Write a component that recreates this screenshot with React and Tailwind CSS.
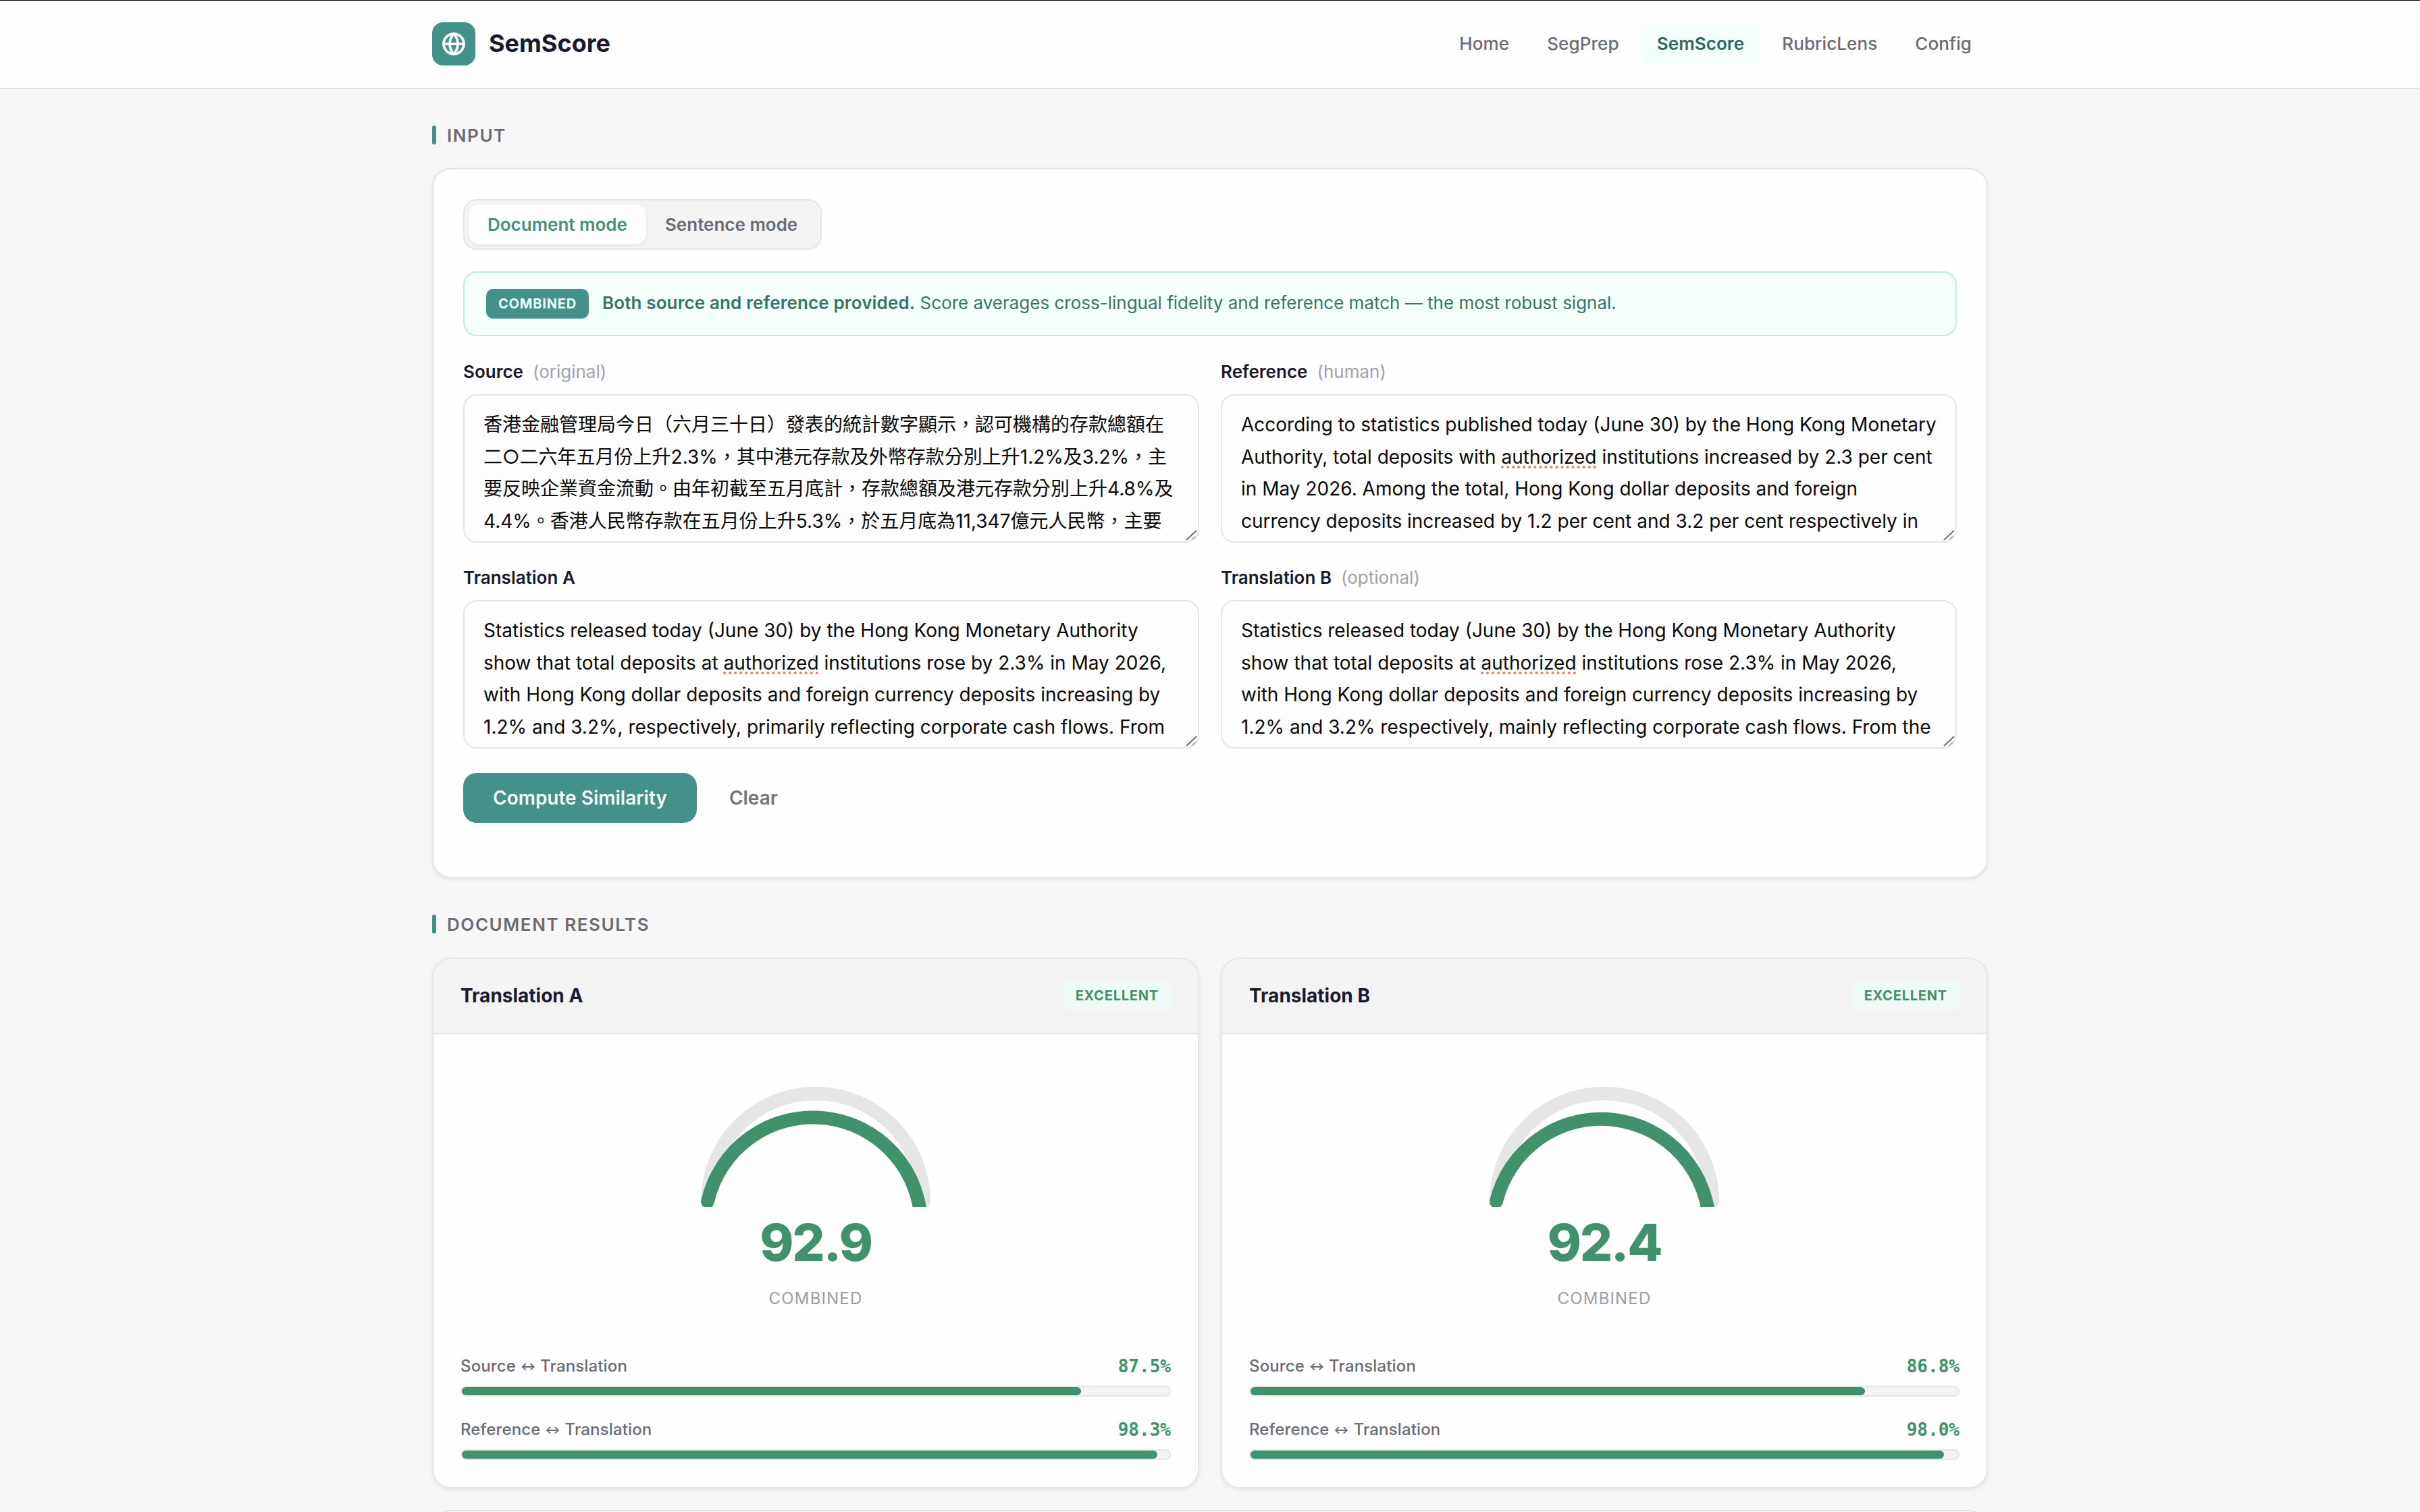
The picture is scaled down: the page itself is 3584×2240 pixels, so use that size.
import React from 'react';

const navItems = ['Home', 'SegPrep', 'SemScore', 'RubricLens', 'Config'];

const fields = [
  {
    label: 'Source',
    hint: '(original)',
    lines: [
      '香港金融管理局今日（六月三十日）發表的統計數字顯示，認可機構的存款總額在',
      '二○二六年五月份上升2.3%，其中港元存款及外幣存款分別上升1.2%及3.2%，主',
      '要反映企業資金流動。由年初截至五月底計，存款總額及港元存款分別上升4.8%及',
      '4.4%。香港人民幣存款在五月份上升5.3%，於五月底為11,347億元人民幣，主要',
    ],
  },
  {
    label: 'Reference',
    hint: '(human)',
    lines: [
      'According to statistics published today (June 30) by the Hong Kong Monetary',
      'Authority, total deposits with authorized institutions increased by 2.3 per cent',
      'in May 2026. Among the total, Hong Kong dollar deposits and foreign',
      'currency deposits increased by 1.2 per cent and 3.2 per cent respectively in',
    ],
  },
  {
    label: 'Translation A',
    lines: [
      'Statistics released today (June 30) by the Hong Kong Monetary Authority',
      'show that total deposits at authorized institutions rose by 2.3% in May 2026,',
      'with Hong Kong dollar deposits and foreign currency deposits increasing by',
      '1.2% and 3.2%, respectively, primarily reflecting corporate cash flows. From',
    ],
  },
  {
    label: 'Translation B',
    hint: '(optional)',
    lines: [
      'Statistics released today (June 30) by the Hong Kong Monetary Authority',
      'show that total deposits at authorized institutions rose 2.3% in May 2026,',
      'with Hong Kong dollar deposits and foreign currency deposits increasing by',
      '1.2% and 3.2% respectively, mainly reflecting corporate cash flows. From the',
    ],
  },
];

const results = [
  { name: 'Translation A', score: 92.9, source: 87.5, reference: 98.3 },
  { name: 'Translation B', score: 92.4, source: 86.8, reference: 98.0 },
];

const SectionTitle = ({ children }) => (
  <div className="flex h-7 items-center gap-4">
    <span className="h-7 w-1.5 rounded-[3px] bg-[#40918a]" />
    <h2 className="text-[26px] font-semibold tracking-[0.06em] text-[#6b6b76]">{children}</h2>
  </div>
);

// Underlines the word flagged by the spell checker
const SpellChecked = ({ text }) => {
  const [before, after] = text.split('authorized');
  if (after === undefined) return text;
  return (
    <>
      {before}
      <span className="underline decoration-[#dc8468] decoration-dotted decoration-[4px] underline-offset-[4px] [text-decoration-skip-ink:none]">
        authorized
      </span>
      {after}
    </>
  );
};

const TextField = ({ label, hint, lines }) => (
  <div>
    <div className="flex h-[42px] items-center gap-3.5 pb-px text-[26px]">
      <span className="font-semibold text-[#1a1a2e]">{label}</span>
      {hint && <span className="text-[#a1a1ad]">{hint}</span>}
    </div>
    <div className="relative mt-3 h-[220px] overflow-hidden rounded-[20px] border-2 border-[#e6e6e8] bg-[#fdfdfd] px-7 pt-5 text-[28px] leading-[47.6px] text-[#0a0a0a]">
      {lines.map((line) => (
        <div key={line} className="whitespace-nowrap">
          <SpellChecked text={line} />
        </div>
      ))}
      <svg className="absolute right-0 bottom-0" width="20" height="20" viewBox="0 0 20 20" stroke="#6f6f6f" strokeWidth="2">
        <path d="M3 18 L18 4 M11 18 L18 12" />
      </svg>
    </div>
  </div>
);

const Gauge = ({ score }) => {
  const angle = Math.PI * (1 - score / 100);
  const x = 90 + 80 * Math.cos(angle);
  const y = 90 + 80 * Math.sin(angle);
  return (
    <svg width="360" height="188" viewBox="0 0 180 94" fill="none" strokeWidth="10" strokeLinecap="round">
      <path d="M10 90 A80 80 0 0 1 170 90" stroke="#e6e6e6" />
      <path d={`M10 90 A80 80 0 0 1 ${x} ${y}`} stroke="#40916c" />
    </svg>
  );
};

const Metric = ({ from, value }) => (
  <div>
    <div className="flex h-[38px] items-center justify-between">
      <span className="text-[24px] font-medium tracking-[0.006em] text-[#6b6b76]">
        {from} <span className="align-[2px] text-[17px] font-bold">↔</span> Translation
      </span>
      <span className="font-['DejaVu_Sans_Mono',monospace] text-[26px] font-bold text-[#40916c]">{value.toFixed(1)}%</span>
    </div>
    <div className="mt-2.5 h-4 rounded-full border-2 border-[#e6e6e8] bg-[#f4f4f5]">
      <div className="h-full rounded-full bg-[#40916c]" style={{ width: `${value}%` }} />
    </div>
  </div>
);

const ResultCard = ({ name, score, source, reference }) => (
  <div className="h-[786px] overflow-hidden rounded-[28px] border-2 border-[#e6e6e8] bg-[#fefefe] shadow-[0_2px_6px_rgba(0,0,0,0.08)]">
    <div className="flex h-[111px] items-center justify-between border-b-2 border-[#e6e6e8] bg-[#f3f3f4] px-10 pb-px">
      <h3 className="text-[28px] font-bold text-[#1a1a2e]">{name}</h3>
      <span className="flex h-[42px] items-center rounded-lg bg-[#effbf6] px-[18px] text-[20px] font-bold tracking-[0.04em] text-[#40916c]">
        EXCELLENT
      </span>
    </div>
    <div className="flex flex-col items-center pt-[68px]">
      <Gauge score={score} />
      <div className="mt-[14px] text-[76px] leading-[76px] font-extrabold tracking-[-0.03em] text-[#40916c]">{score.toFixed(1)}</div>
      <div className="mt-[27px] text-[24px] leading-[38px] tracking-[0.048em] text-[#9c9ca8]">COMBINED</div>
    </div>
    <div className="mt-[62px] flex flex-col gap-[30px] px-10">
      <Metric from="Source" value={source} />
      <Metric from="Reference" value={reference} />
    </div>
  </div>
);

const App = () => {
  return (
    <div className="h-[2240px] w-[3584px] overflow-hidden bg-[#f7f7f7] font-[Inter,'Noto_Sans_CJK_TC',sans-serif]">
      <header className="h-[132px] border-t border-b-2 border-t-black border-b-[#e4e4e6] bg-[#fefefe] pb-px">
        <div className="mx-auto flex h-full w-[2304px] items-center justify-between">
          <div className="flex items-center gap-5">
            <div className="flex h-16 w-16 items-center justify-center rounded-2xl bg-[#439188]">
              <svg width="36" height="36" viewBox="0 0 24 24" fill="none" stroke="#fff" strokeWidth="2.5">
                <circle cx="12" cy="12" r="10" />
                <path d="M2 12h20M12 2a15.3 15.3 0 0 1 4 10 15.3 15.3 0 0 1-4 10 15.3 15.3 0 0 1-4-10 15.3 15.3 0 0 1 4-10z" />
              </svg>
            </div>
            <span className="pb-0.5 text-[36px] font-bold text-[#1a1a2e]">SemScore</span>
          </div>
          <nav className="flex gap-2 text-[26px] font-medium tracking-[0.004em] text-[#6b6b76]">
            {navItems.map((item) => (
              <a
                key={item}
                className={
                  item === 'SemScore'
                    ? 'flex h-16 items-center rounded-xl bg-[#f4fefb] px-6 pb-0.5 font-semibold text-[#2d6a5f]'
                    : 'flex h-16 items-center px-6 pb-0.5'
                }
              >
                {item}
              </a>
            ))}
          </nav>
        </div>
      </header>

      <main className="mx-auto w-[2304px] pt-[54px]">
        <SectionTitle>INPUT</SectionTitle>
        <section className="mt-[35px] h-[1052px] rounded-[28px] border-2 border-[#e6e6e8] bg-[#fefefe] p-11 shadow-[0_2px_6px_rgba(0,0,0,0.08)]">
          <div className="flex h-[75px] w-fit rounded-[20px] border-2 border-[#e6e6e8] bg-[#f4f4f5] p-1.5 text-[26px] font-semibold">
            <button className="rounded-2xl bg-[#fefefe] px-7 text-[#439180] shadow-[0_2px_4px_rgba(0,0,0,0.06)]">Document mode</button>
            <button className="px-7 text-[#6b6b76]">Sentence mode</button>
          </div>

          <div className="mt-8 flex h-24 items-center gap-5 rounded-[20px] border-2 border-[#bdeddc] bg-[#f4fefb] px-8 text-[26px] text-[#3a7468]">
            <span className="flex h-11 items-center rounded-[10px] bg-[#439188] px-[18px] text-[20px] font-bold tracking-[0.04em] text-[#f0fffb]">
              COMBINED
            </span>
            <p className="pb-[3px]">
              <strong className="font-semibold tracking-[0.005em]">Both source and reference provided.</strong> Score averages
              cross-lingual fidelity and reference match — the most robust signal.
            </p>
          </div>

          <div className="mt-8 grid grid-cols-2 gap-x-8 gap-y-[31px]">
            {fields.map((field) => (
              <TextField key={field.label} {...field} />
            ))}
          </div>

          <div className="mt-9 flex text-[28px] font-semibold">
            <button className="h-[74px] rounded-[20px] bg-[#439188] px-11 text-[#f4fffd]">Compute Similarity</button>
            <button className="px-12 text-[#74747e]">Clear</button>
          </div>
        </section>

        <div className="mt-[54px]">
          <SectionTitle>DOCUMENT RESULTS</SectionTitle>
        </div>
        <section className="mt-9 grid grid-cols-2 gap-8">
          {results.map((result) => (
            <ResultCard key={result.name} {...result} />
          ))}
        </section>
        <div className="mt-8 h-40 rounded-[28px] border-2 border-[#e0e0e2] bg-[#fefefe]" />
      </main>
    </div>
  );
};

export default App;
